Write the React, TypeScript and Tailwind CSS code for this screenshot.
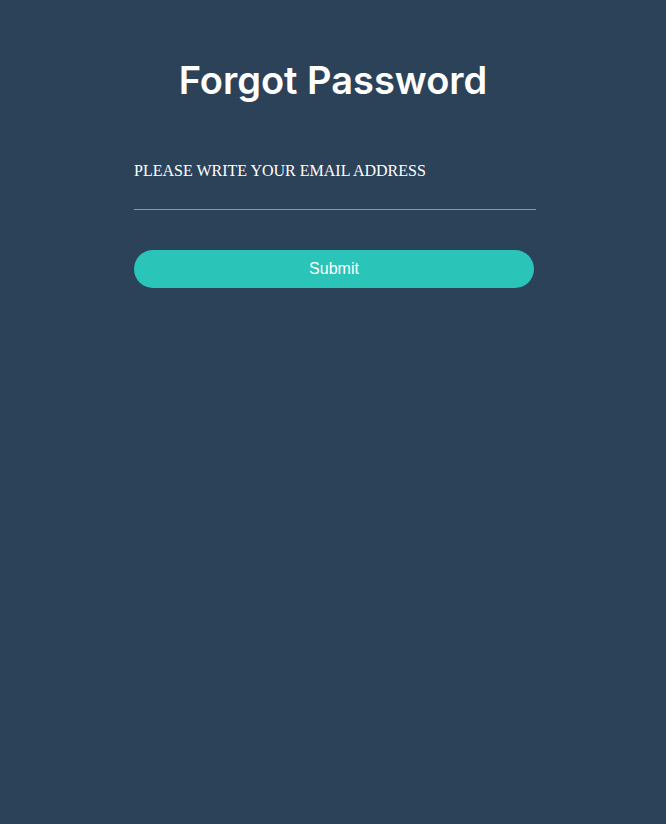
export default function App() {
  return (
    <div className="min-h-[824px] bg-[#2c4259] pt-[56px]">
      <h1 className="text-center text-[38px] leading-[48px] font-semibold text-white font-['Inter','Noto_Sans',sans-serif]">
        Forgot Password
      </h1>
      <form className="mt-[55px] ml-[134px] w-[402px]" onSubmit={e => e.preventDefault()}>
        <label className="block text-[16px] leading-[24px] text-white font-['Liberation_Serif',serif]">
          PLEASE WRITE YOUR EMAIL ADDRESS
        </label>
        <input
          type="email"
          className="block w-full h-[23px] mt-[4px] bg-transparent border-0 border-b border-[#8b96a3] text-white outline-none"
        />
        <button
          type="submit"
          className="mt-[40px] w-[400px] h-[38px] rounded-full bg-[#2ac4b9] text-white text-[16px] font-['Liberation_Sans',sans-serif]"
        >
          Submit
        </button>
      </form>
    </div>
  )
}
